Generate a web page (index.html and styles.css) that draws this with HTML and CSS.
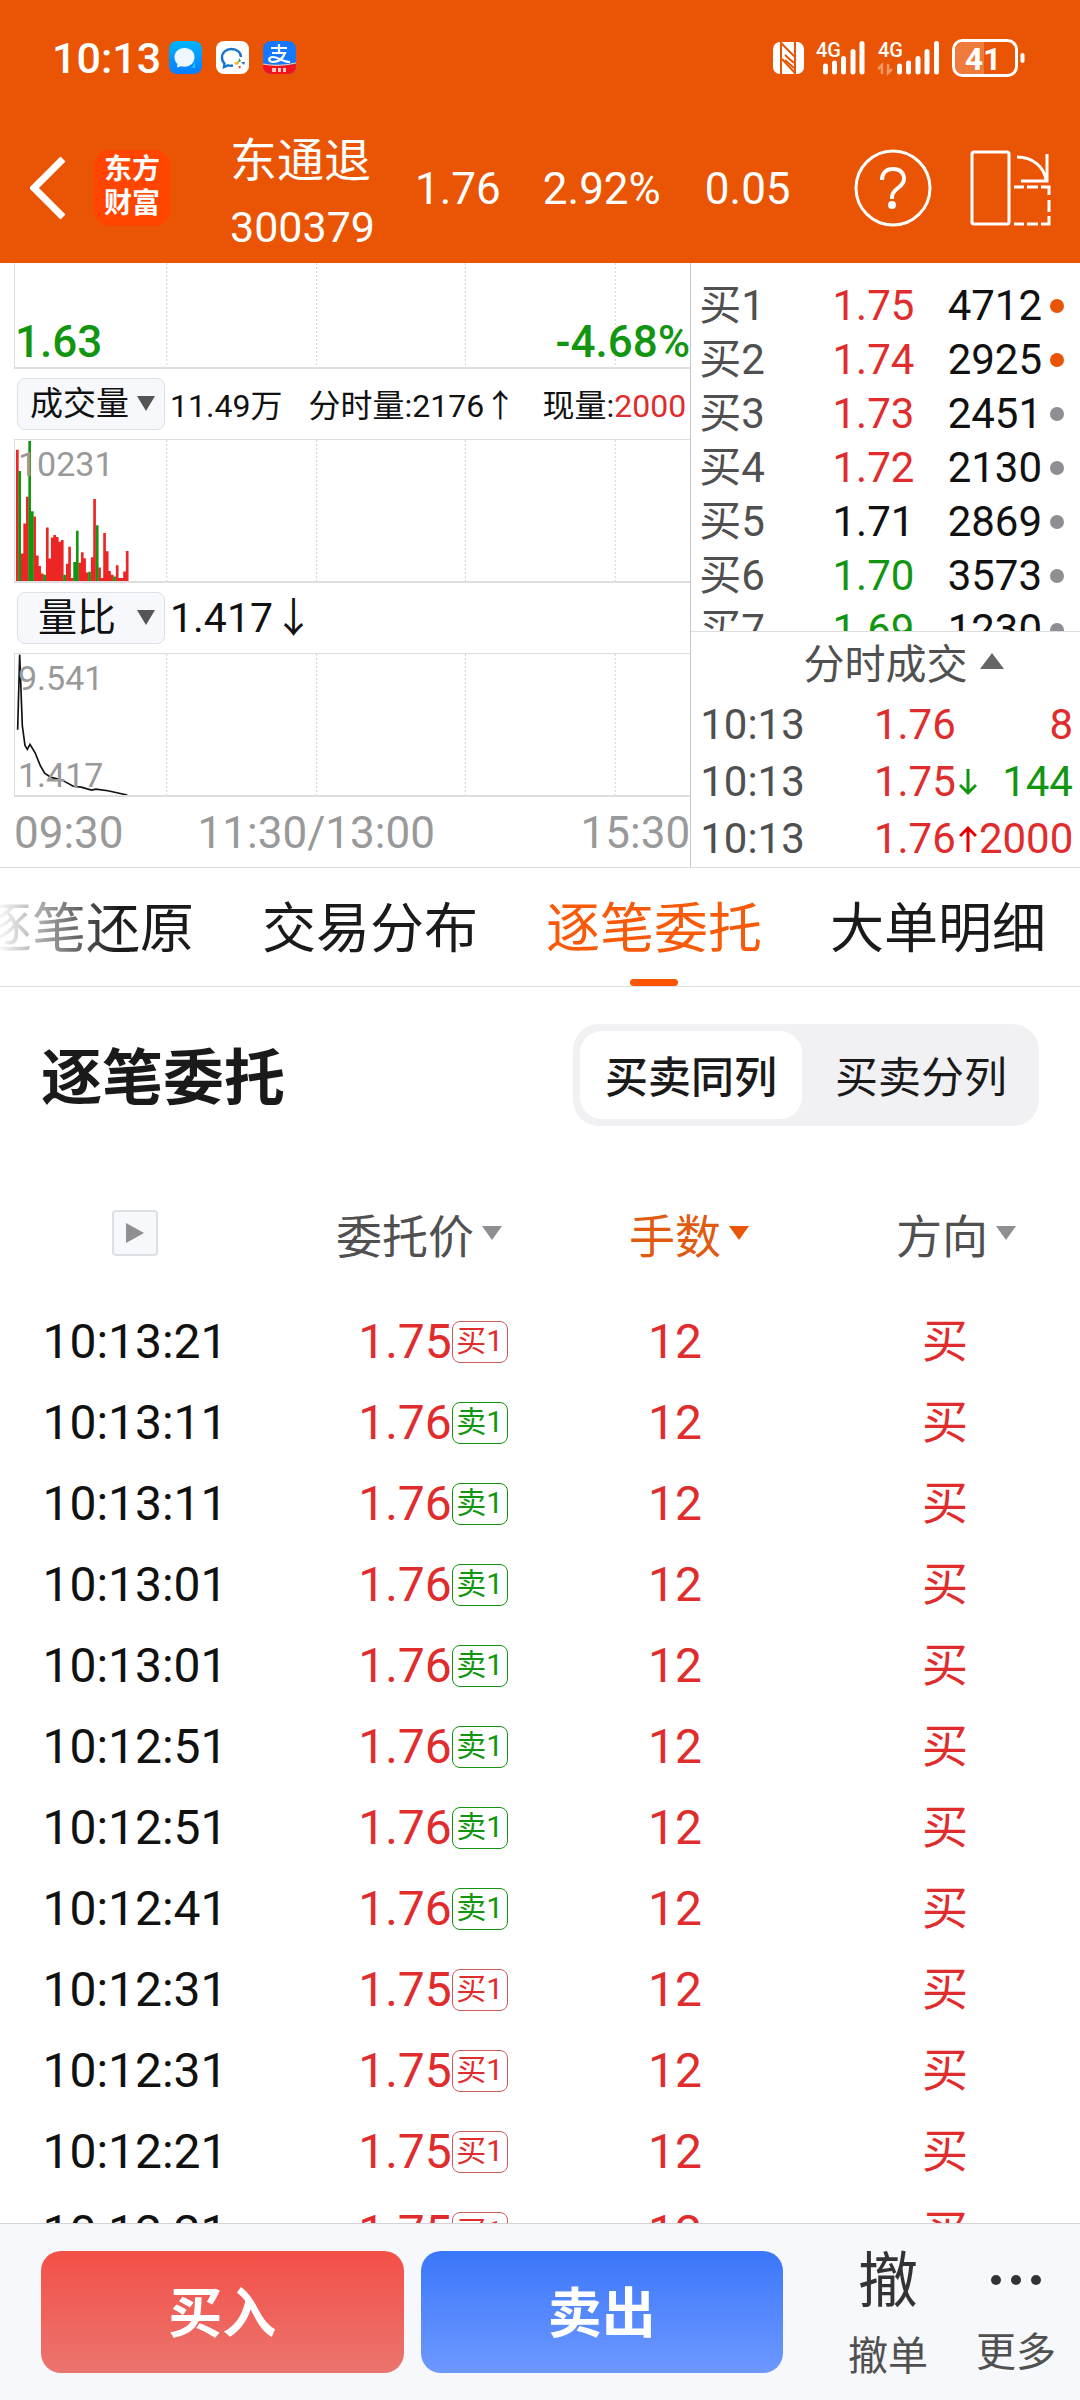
FILE: index.html
```html
<!DOCTYPE html>
<html lang="zh-CN">
<head>
<meta charset="utf-8">
<meta name="viewport" content="width=device-width, initial-scale=1">
<title>东通退 300379</title>
<link rel="stylesheet" href="styles.css">
</head>
<body>
<header class="top">
  <div class="status">
    <span class="clock">10:13</span>
    <svg class="app" viewBox="0 0 33 33" aria-hidden="true"><defs><linearGradient id="msg" x1="0" y1="0" x2="0" y2="1"><stop offset="0" stop-color="#00b4ff"/><stop offset="1" stop-color="#0a7cff"/></linearGradient></defs><rect width="33" height="33" rx="8" fill="url(#msg)"/><path d="M20 26c4 1 5-3 6-6v7z" fill="#18c8ff"/><path d="M15.500 7C9.500 7 5.500 11 5.500 16c0 3 1.200 5.300 3 7l-.5 3.500 4-1.300c1 .3 2.300.5 3.500.5 6 0 10-4.200 10-9.700S21.500 7 15.500 7z" fill="#eef7ff"/></svg>
    <svg class="app" viewBox="0 0 33 33" aria-hidden="true"><rect width="33" height="33" rx="8" fill="#fff"/><path d="M17 24.500c-1.500.3-3.500.2-5-.2L8 26l.5-3.500C6.500 20.800 6 18.500 6 16.500 6 11.500 10 8 15.500 8S25 11.500 25 16" fill="none" stroke="#1677c8" stroke-width="2.400"/><path d="M23 17l2 3-3 2z" fill="#3aa84a"/><path d="M18 22l4-2 1 3-3 1z" fill="#f5b932"/><path d="M25 21l4 0-1 3z" fill="#1677c8"/><path d="M22 25l3 0-1 3z" fill="#e8502a"/></svg>
    <svg class="app" viewBox="0 0 33 33" aria-hidden="true"><rect width="33" height="33" rx="8" fill="#1677ff"/><path d="M0 23.500Q16 26 33 23v2a8 8 0 0 1-8 8H8a8 8 0 0 1-8-8z" fill="#f5121d"/><path d="M0 23Q16 26 33 22" fill="none" stroke="#ffc9a0" stroke-width="1.200"/><path d="M8 7h16M16 3v9M9 12h13c-2 5-6 9-12 9-5 0-5-5 0-5 5 0 10 5 17 5" fill="none" stroke="#fff" stroke-width="2.200"/><path d="M9 27h4v4H9zM15 27h3v4h-3zM20 27h3v4h-3z" fill="#ffc9c0"/></svg>
    <span class="spacer"></span>
    <svg class="nfc" viewBox="0 0 31 32" aria-hidden="true"><rect width="31" height="32" rx="7" fill="#fff"/><path d="M8 32V1l14 14M22 0v31L9 17" fill="none" stroke="#e95504" stroke-width="2"/><path d="M12 13l9 8M12 18l9 8" stroke="#e95504" stroke-width="2"/></svg>
    <svg class="signal" viewBox="0 0 50 34" aria-hidden="true"><text x="0" y="16" class="net">4G</text><path d="M9.500 31v-6M18.500 31V22M27.500 31V17.500M37 31V10.500M46 31V2.500" stroke="#fff" stroke-width="5" stroke-linecap="round"/></svg>
    <svg class="signal wide" viewBox="0 0 62 34" aria-hidden="true"><text x="0" y="16" class="net">4G</text><path d="M4 33V24l-4 4M10 23v9l4-4" fill="none" stroke="#fff" stroke-opacity=".4" stroke-width="2.500"/><path d="M21.500 31v-6M30.500 31V22M40 31V17.500M49 31V10.500M58.500 31V2.500" stroke="#fff" stroke-width="5" stroke-linecap="round"/></svg>
    <svg class="battery" viewBox="0 0 74 38" aria-hidden="true"><path d="M12 3H32V35H12a9 9 0 0 1-9-9V12a9 9 0 0 1 9-9z" fill="#fff" fill-opacity=".22"/><rect x="1.500" y="1.500" width="63" height="35" rx="9" fill="none" stroke="#fff" stroke-width="3"/><path d="M70.500 16v6" stroke="#fff" stroke-width="4" stroke-linecap="round"/><text x="31" y="31" text-anchor="middle" class="charge">41</text></svg>
  </div>
  <div class="bar">
    <button class="icon-btn back" aria-label="返回"><svg viewBox="0 0 36 64" width="36" height="64"><path d="M33 3L4 32l29 29" fill="none" stroke="#fff" stroke-width="7"/></svg></button>
    <div class="logo">东方<br>财富</div>
    <div class="stock"><h1>东通退</h1><span>300379</span></div>
    <span class="quote q1">1.76</span><span class="quote q2">2.92%</span><span class="quote q3">0.05</span>
    <button class="icon-btn help" aria-label="帮助"><svg viewBox="0 0 78 78" width="78" height="78"><circle cx="39" cy="39" r="37" fill="none" stroke="#fff" stroke-width="3"/><path d="M28 31c0-7 4-11 11-11s11 4 11 10c0 9-12 9-12 18v2" fill="none" stroke="#fff" stroke-width="4"/><circle cx="38" cy="56" r="4" fill="#fff"/></svg></button>
    <button class="icon-btn rotate" aria-label="横屏"><svg viewBox="0 0 82 76" width="82" height="76"><rect x="2" y="2" width="37" height="72" rx="2" fill="none" stroke="#fff" stroke-width="3"/><path d="M47 7c16 0 27 10 29 23M77 4v27H51" fill="none" stroke="#fff" stroke-width="3"/><path d="M44 37h10m3 0h11m3 0h8v8m0 5v12m0 4v8h-8m-3 0H57m-3 0H44" fill="none" stroke="#fff" stroke-width="3"/></svg></button>
  </div>
</header>

<section class="market">
  <div class="charts">
    <div class="plot price">
      <svg viewBox="0 0 2028 318" preserveAspectRatio="none"><path class="grid" d="M456 0V318M906 0V318M1353 0V318M1803 0V318"/></svg>
      <span class="low">1.63</span><span class="low-rate">-4.68%</span>
    </div>
    <div class="tools">
      <label class="pick"><select class="small" aria-label="指标一"><option>成交量</option></select></label>
      <span class="narrow">11.49万</span>
      <span class="narrow push">分时量:2176↑</span>
      <span class="narrow push">现量:<b>2000</b></span>
    </div>
    <div class="plot">
      <svg viewBox="0 0 2028 432" preserveAspectRatio="none"><path class="grid" d="M456 0V432M906 0V432M1353 0V432M1803 0V432"/>
        <path class="vol up" d="M7 432V30M22 432V348M29 432V256M37 432V174M59 432V234M67 432V354M74 432V386M82 432V409M97 432V268M104 432V363M112 432V299M119 432V291M127 432V297M134 432V312M142 432V306M157 432V379M164 432V327M172 432V423M194 432V376M202 432V344M209 432V362M217 432V406M232 432V359M239 432V181M254 432V391M262 432V423M269 432V285M277 432V341M284 432V401M292 432V413M307 432V384M314 432V423M322 432V423M329 432V403M337 432V340"/>
        <path class="vol down" d="M14 432V95M44 432V3M52 432V218M89 432V413M149 432V413M179 432V374M187 432V278M224 432V404M247 432V261M299 432V418"/></svg>
      <span class="mark">10231</span>
    </div>
    <div class="tools">
      <label class="pick"><select aria-label="指标二"><option>量比</option></select></label>
      <span class="ratio">1.417↓</span>
    </div>
    <div class="plot">
      <svg viewBox="0 0 2028 432" preserveAspectRatio="none"><path class="grid" d="M456 0V432M906 0V432M1353 0V432M1803 0V432"/><path class="line" d="M8 232L14 2l8 218 8 60 7 12 8-15 15 25 16 40 13 23 19 13 31 7 36 20 24 3 31 9 13-3 36 5 58 13"/></svg>
      <span class="mark">9.541</span><span class="mark bottom">1.417</span>
    </div>
    <div class="axis"><span>09:30</span><span>11:30/13:00</span><span class="end">15:30</span></div>
  </div>
  <div class="depth">
    <div class="book"><table>
      <tr><td>买1</td><td class="r">1.75</td><td>4712</td><td><i class="dot hot"></i></td></tr>
      <tr><td>买2</td><td class="r">1.74</td><td>2925</td><td><i class="dot hot"></i></td></tr>
      <tr><td>买3</td><td class="r">1.73</td><td>2451</td><td><i class="dot"></i></td></tr>
      <tr><td>买4</td><td class="r">1.72</td><td>2130</td><td><i class="dot"></i></td></tr>
      <tr><td>买5</td><td>1.71</td><td>2869</td><td><i class="dot"></i></td></tr>
      <tr><td>买6</td><td class="g">1.70</td><td>3573</td><td><i class="dot"></i></td></tr>
      <tr><td>买7</td><td class="g">1.69</td><td>1230</td><td><i class="dot"></i></td></tr>
    </table></div>
    <button class="deals-title">分时成交<svg viewBox="0 0 24 16" width="24" height="16" aria-hidden="true"><path d="M12 0l12 16H0z" fill="#666"/></svg></button>
    <table class="deals">
      <tr><td>10:13</td><td class="r">1.76</td><td></td><td class="r">8</td></tr>
      <tr><td>10:13</td><td class="r">1.75</td><td><svg viewBox="0 0 18 28" width="18" height="28" role="img" aria-label="跌"><path d="M9 1v24M1 17l8 8 8-8" fill="none" stroke="#129612" stroke-width="3"/></svg></td><td class="g">144</td></tr>
      <tr><td>10:13</td><td class="r">1.76</td><td><svg viewBox="0 0 18 28" width="18" height="28" role="img" aria-label="涨"><path d="M9 27V3M1 11l8-8 8 8" fill="none" stroke="#e00000" stroke-width="3"/></svg></td><td class="r">2000</td></tr>
    </table>
  </div>
</section>

<nav class="tabs"><a href="#restore" class="faded">逐笔还原</a><a href="#spread">交易分布</a><a href="#orders" class="on" aria-current="page">逐笔委托</a><a href="#large">大单明细</a></nav>

<main class="orders" id="orders">
  <div class="head">
    <h2>逐笔委托</h2>
    <div class="segment"><button class="on">买卖同列</button><button>买卖分列</button></div>
  </div>
  <table class="list">
    <thead><tr>
      <th><button class="play" aria-label="播放"><svg viewBox="0 0 18 20" width="18" height="20"><path d="M0 0l18 10L0 20z" fill="#8e8e93"/></svg></button></th>
      <th><button class="sort">委托价<i></i></button></th>
      <th><button class="sort on">手数<i></i></button></th>
      <th><button class="sort">方向<i></i></button></th>
    </tr></thead>
    <tbody>
      <tr><td>10:13:21</td><td>1.75<span class="tag"><em>买1</em></span></td><td>12</td><td>买</td></tr>
      <tr><td>10:13:11</td><td>1.76<span class="tag sell"><em>卖1</em></span></td><td>12</td><td>买</td></tr>
      <tr><td>10:13:11</td><td>1.76<span class="tag sell"><em>卖1</em></span></td><td>12</td><td>买</td></tr>
      <tr><td>10:13:01</td><td>1.76<span class="tag sell"><em>卖1</em></span></td><td>12</td><td>买</td></tr>
      <tr><td>10:13:01</td><td>1.76<span class="tag sell"><em>卖1</em></span></td><td>12</td><td>买</td></tr>
      <tr><td>10:12:51</td><td>1.76<span class="tag sell"><em>卖1</em></span></td><td>12</td><td>买</td></tr>
      <tr><td>10:12:51</td><td>1.76<span class="tag sell"><em>卖1</em></span></td><td>12</td><td>买</td></tr>
      <tr><td>10:12:41</td><td>1.76<span class="tag sell"><em>卖1</em></span></td><td>12</td><td>买</td></tr>
      <tr><td>10:12:31</td><td>1.75<span class="tag"><em>买1</em></span></td><td>12</td><td>买</td></tr>
      <tr><td>10:12:31</td><td>1.75<span class="tag"><em>买1</em></span></td><td>12</td><td>买</td></tr>
      <tr><td>10:12:21</td><td>1.75<span class="tag"><em>买1</em></span></td><td>12</td><td>买</td></tr>
      <tr><td>10:12:21</td><td>1.75<span class="tag"><em>买1</em></span></td><td>12</td><td>买</td></tr>
    </tbody>
  </table>
</main>

<footer class="actions">
  <button class="trade buy">买入</button>
  <button class="trade sell">卖出</button>
  <button class="tool cancel"><span class="glyph">撤</span>撤单</button>
  <button class="tool more"><span class="glyph"><svg viewBox="0 0 50 10" width="50" height="10" aria-hidden="true"><g fill="#333"><circle cx="5" cy="5" r="5"/><circle cx="25" cy="5" r="5"/><circle cx="45" cy="5" r="5"/></g></svg></span>更多</button>
</footer>
</body>
</html>
```
FILE: styles.css
```css
:root {
  --orange: #e95504;
  --red: #e02c2c;
  --green: #129612;
  --line: #dedede;
  --sans: Roboto, "Noto Sans CJK SC", sans-serif;
}

* { box-sizing: border-box; }

body {
  margin: 0;
  height: 100vh;
  display: flex;
  flex-direction: column;
  overflow: hidden;
  background: #fff;
  color: #111;
  font-family: var(--sans);
}

button, select { font: inherit; color: inherit; border: 0; background: none; padding: 0; margin: 0; }
i, em { font-style: normal; }
svg { display: block; flex: none; }
table { border-collapse: collapse; width: 100%; table-layout: fixed; }
td, th { padding: 0; font-weight: 400; }
a { color: inherit; text-decoration: none; }

/* header */
.top { flex: none; background: var(--orange); color: #fff; }
.status { height: 115px; padding: 0 54px 0 52px; display: flex; align-items: center; }
.clock { font-size: 43px; font-weight: 500; margin-right: 8px; }
.app { width: 33px; height: 33px; margin-right: 14px; }
.spacer { flex: 1; }
.nfc { width: 31px; height: 32px; margin-right: 12px; }
.signal { width: 50px; height: 34px; margin-right: 12px; overflow: visible; }
.signal.wide { width: 62px; }
.net { font: 500 20px var(--sans); fill: #fff; }
.charge { font: 700 32px var(--sans); fill: #fff; }
.battery { width: 74px; height: 38px; }
.bar { height: 148px; display: flex; align-items: center; padding: 0 28px 2px 30px; }
.logo {
  width: 76px; height: 76px; margin-left: 28px; border-radius: 16px;
  background: #ff4500; font-size: 28px; font-weight: 700; line-height: 34px;
  text-align: center; padding-top: 3px;
}
.stock { margin-left: 60px; padding-top: 12px; display: flex; flex-direction: column; font-size: 43px; line-height: 66px; }
.stock h1 { margin: 0; font-size: 47px; font-weight: 400; line-height: 66px; }
.quote { font-size: 44px; padding-top: 2px; }
.q1 { margin-left: 40px; }
.q2 { margin-left: 42px; }
.q3 { margin-left: 44px; }
.help { margin-left: auto; }
.rotate { margin-left: 38px; }

/* charts and depth */
.market { flex: none; display: grid; grid-template-columns: 64% 36%; border-bottom: 1px solid var(--line); }
.charts { padding-left: 14px; border-right: 1px solid #c8c8c8; }
.plot { position: relative; height: 144px; border: solid var(--line); border-width: 1px 0 2px 1px; }
.plot.price { height: 106px; border-top: 0; }
.plot svg { width: 100%; height: 100%; }
.grid { fill: none; stroke: #d2d2d6; stroke-width: 1; stroke-dasharray: 2 2; vector-effect: non-scaling-stroke; }
.vol { fill: none; stroke-width: 8; }
.up { stroke: #ee2525; }
.down { stroke: #129612; }
.line { fill: none; stroke: #111; stroke-width: 5; }
.low, .low-rate { position: absolute; bottom: 0; font-size: 44px; line-height: 50px; font-weight: 500; color: var(--green); }
.low { left: 0; }
.low-rate { right: 0; }
.mark { position: absolute; left: 3px; top: 4px; font-size: 34px; line-height: 40px; color: #999; }
.mark.bottom { top: auto; bottom: 0; }
.tools { height: 70px; display: flex; align-items: center; padding: 0 4px 0 3px; white-space: nowrap; }
.pick { position: relative; flex: none; width: 148px; margin-right: 5px; }
.pick::after {
  content: ""; position: absolute; right: 10px; top: 18px;
  border: solid transparent; border-width: 15px 9px 0; border-top-color: #555;
}
.pick select {
  display: block; appearance: none; width: 100%; height: 52px; padding-left: 20px;
  border: 1px solid #dde0e4; border-radius: 8px; background: #f6f8fb; font-size: 39px; line-height: 48px;
}
.pick .small { font-size: 33px; padding-left: 12px; }
.narrow { font-size: 32px; line-height: 50px; padding-top: 4px; }
.narrow b { font-weight: 400; color: var(--red); }
.push { margin-left: auto; }
.ratio { font-size: 41px; line-height: 50px; padding-bottom: 1px; }
.axis { height: 69px; display: flex; align-items: center; font-size: 44px; color: #999; padding-top: 2px; }
.axis span + span { margin-left: 74px; }
.axis .end { margin-left: auto; }

.depth { display: flex; flex-direction: column; color: #111; font-size: 42px; }
.depth td:first-child { color: #505050; }
.depth .r, .r { color: var(--red); }
.depth .g, .g { color: var(--green); }
.book { height: 369px; padding: 16px 16px 0 8px; overflow: hidden; border-bottom: 1px solid var(--line); }
.book tr { height: 54px; }
.book td { line-height: 54px; height: 54px; }
.book td:nth-child(2), .book td:nth-child(3) { text-align: right; }
.book td:nth-child(1) { width: 34%; }
.book td:nth-child(2) { width: 25%; }
.book td:nth-child(3) { width: 35%; }
.dot { display: block; width: 14px; height: 14px; margin-left: auto; border-radius: 50%; background: #8e8e93; }
.dot.hot { background: var(--orange); }
.deals-title { height: 64px; display: flex; align-items: center; justify-content: center; gap: 12px; font-size: 41px; color: #505050; padding: 0 0 6px 36px; }
.deals td { height: 57px; line-height: 57px; }
.deals td:first-child { width: 47%; padding-left: 9px; }
.deals td:nth-child(2) { width: 22%; }
.deals td:nth-child(3) { width: 5%; }
.deals td:last-child { text-align: right; padding-right: 7px; }

/* tabs */
.tabs {
  flex: none; height: 119px; display: flex; justify-content: flex-end; gap: 68px; padding-right: 34px;
  overflow: hidden; border-bottom: 1px solid var(--line); font-size: 54px; line-height: 124px; white-space: nowrap;
}
.tabs a { flex: none; height: 118px; color: #1a1a1a; }
.tabs .faded { background: linear-gradient(90deg, #fff 8%, #1a1a1a 65%); -webkit-background-clip: text; background-clip: text; color: transparent; }
.tabs .on { position: relative; color: #f95a0a; }
.tabs .on::after { content: ""; position: absolute; left: 50%; bottom: 0; width: 48px; height: 7px; margin-left: -24px; border-radius: 4px; background: #ff5500; }

/* order list */
.orders { flex: 1; min-height: 0; overflow: hidden; }
.head { height: 176px; padding: 0 41px; display: flex; align-items: center; justify-content: space-between; }
.head h2 { margin: 0; padding-bottom: 3px; font-size: 61px; font-weight: 700; color: #1a1a1a; }
.segment { display: flex; align-items: center; height: 102px; padding: 7px; border-radius: 26px; background: #f1f1f4; font-size: 43px; gap: 8px; }
.segment button { height: 88px; width: 222px; padding-bottom: 3px; border-radius: 22px; color: #1a1a1a; }
.segment .on { background: #fff; font-weight: 500; }
.list th { height: 138px; padding-top: 2px; color: #505050; font-size: 46px; }
.play { display: flex; align-items: center; justify-content: center; width: 46px; height: 46px; margin: 0 auto; border: 2px solid #dde0e4; border-radius: 4px; background: #f6f8fb; }
.sort { display: inline-flex; align-items: center; }
.sort i { width: 0; height: 14px; }
.sort i::before { content: ""; display: block; width: 20px; height: 14px; margin-left: 8px; background: #8e8e93; clip-path: polygon(0 0, 100% 0, 50% 100%); }
.sort.on { color: #e05a10; }
.sort.on i::before { background: var(--orange); }
.list th:last-child { padding-right: 6px; }
.list td { height: 81px; line-height: 81px; text-align: center; font-size: 48px; color: var(--red); white-space: nowrap; }
.list td:first-child { color: #111; }
.list td:last-child { font-size: 46px; }
.tag { display: inline-flex; width: 0; vertical-align: middle; }
.tag em { flex: none; width: 56px; height: 42px; margin-top: -6px; border: 1px solid #d05a5a; border-radius: 8px; font-size: 30px; line-height: 38px; text-align: center; }
.tag.sell em { color: var(--green); border-color: var(--green); }

/* bottom actions */
.actions { flex: none; display: flex; height: 177px; padding: 27px 0 0 41px; border-top: 1px solid #d2d4d8; background: #f6f8fb; }
.trade { flex: 1; height: 122px; margin-right: 17px; padding-bottom: 5px; border-radius: 20px; color: #fff; font-size: 54px; font-weight: 700; }
.trade.buy { background: linear-gradient(#f35048, #eb746e); }
.trade.sell { background: linear-gradient(#3b77fa, #6d98ff); }
.tool { width: 128px; display: flex; flex-direction: column; align-items: center; height: 122px; font-size: 40px; line-height: 40px; color: #505050; }
.cancel { margin-left: 24px; }
.glyph { display: flex; align-items: center; height: 62px; margin-bottom: 24px; font-size: 60px; line-height: 62px; color: #333; }
```
